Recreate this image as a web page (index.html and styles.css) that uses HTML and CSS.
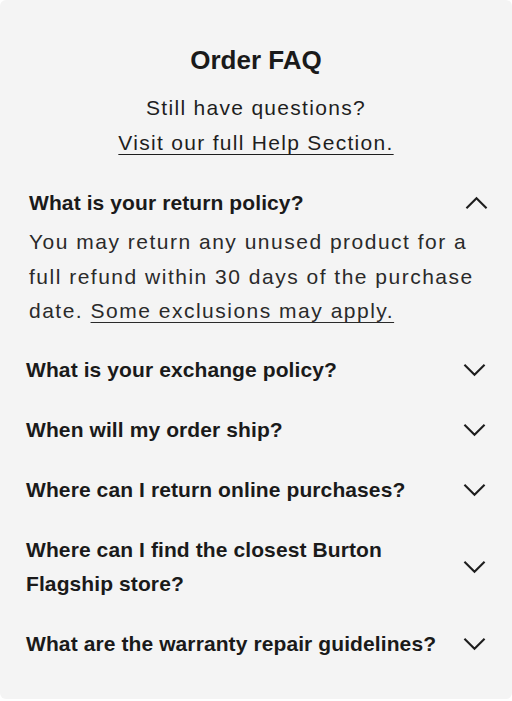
FILE: index.html
```html
<!DOCTYPE html>
<html lang="en">
<head>
    <meta charset="UTF-8">
    <title>Order FAQ</title>
    <link rel="stylesheet" href="styles.css">
</head>
<body>

<div class="faq-card">
    <h2 class="faq-title">Order FAQ</h2>
    <p class="faq-intro">
        Still have questions?<br>
        <a href="#">Visit our full Help Section.</a>
    </p>

    <div class="faq-list">
        <div class="faq-item open">
            <div class="faq-question">
                <span>What is your return policy?</span>
                <svg class="chevron" viewBox="0 0 24 14"><path d="M1.5 12.5L12 2l10.5 10.5"/></svg>
            </div>
            <p class="faq-answer">You may return any unused product for a full refund within 30 days of the purchase date. <a href="#">Some exclusions may apply.</a></p>
        </div>
        <div class="faq-item">
            <div class="faq-question">
                <span>What is your exchange policy?</span>
                <svg class="chevron" viewBox="0 0 24 14"><path d="M1.5 1.5L12 12 22.5 1.5"/></svg>
            </div>
        </div>
        <div class="faq-item">
            <div class="faq-question">
                <span>When will my order ship?</span>
                <svg class="chevron" viewBox="0 0 24 14"><path d="M1.5 1.5L12 12 22.5 1.5"/></svg>
            </div>
        </div>
        <div class="faq-item">
            <div class="faq-question">
                <span>Where can I return online purchases?</span>
                <svg class="chevron" viewBox="0 0 24 14"><path d="M1.5 1.5L12 12 22.5 1.5"/></svg>
            </div>
        </div>
        <div class="faq-item">
            <div class="faq-question">
                <span>Where can I find the closest Burton Flagship store?</span>
                <svg class="chevron" viewBox="0 0 24 14"><path d="M1.5 1.5L12 12 22.5 1.5"/></svg>
            </div>
        </div>
        <div class="faq-item">
            <div class="faq-question">
                <span>What are the warranty repair guidelines?</span>
                <svg class="chevron" viewBox="0 0 24 14"><path d="M1.5 1.5L12 12 22.5 1.5"/></svg>
            </div>
        </div>
    </div>
</div>

</body>
</html>
```

FILE: styles.css
```css
body {
    margin: 0;
    background: #ffffff;
    font-family: "Liberation Sans", Arial, sans-serif;
    color: #1e1e1e;
}
.faq-card {
    background: #f4f4f4;
    border-radius: 6px;
    height: 699px;
    box-sizing: border-box;
    padding-top: 45px;
}
.faq-title {
    margin: 0;
    font-size: 26px;
    line-height: 30px;
    font-weight: bold;
    text-align: center;
    color: #1a1a1a;
}
.faq-intro {
    margin: 15px 0 0;
    font-size: 21px;
    line-height: 35px;
    text-align: center;
    letter-spacing: 1.3px;
}
.faq-intro a, .faq-answer a {
    color: inherit;
    text-decoration: underline;
    text-underline-offset: 4px;
    text-decoration-thickness: 1px;
}
.faq-list {
    margin-top: 13px;
}
.faq-item {
    padding: 13px 26px;
}
.faq-item.open {
    padding: 13px 24px 11px 29px;
}
.faq-question {
    display: flex;
    align-items: center;
    justify-content: space-between;
    gap: 14px;
    font-size: 21px;
    line-height: 34px;
    font-weight: bold;
    letter-spacing: 0.1px;
    color: #1a1a1a;
}
.chevron {
    flex: none;
    width: 23px;
    height: 14px;
    fill: none;
    stroke: #1e1e1e;
    stroke-width: 2.2;
}
.faq-answer {
    margin: 5px 0 0;
    font-size: 21px;
    line-height: 34.5px;
    letter-spacing: 1.5px;
    color: #2a2a2a;
}
```
